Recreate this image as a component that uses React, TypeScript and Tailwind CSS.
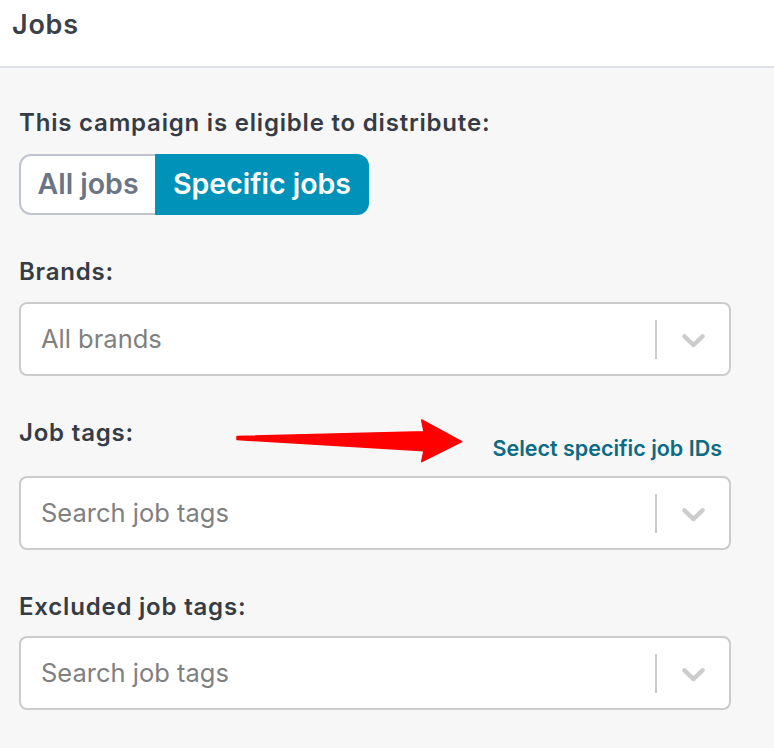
import React from "react"

function Chevron() {
  return (
    <svg viewBox="0 0 20 20" className="h-[39px] w-[39px] fill-[#cccccc]">
      <path d="M4.516 7.548c0.436-0.446 1.043-0.481 1.576 0l3.908 3.747 3.908-3.747c0.533-0.481 1.141-0.446 1.574 0 0.436 0.445 0.408 1.197 0 1.615-0.406 0.418-4.695 4.502-4.695 4.502-0.217 0.223-0.502 0.335-0.787 0.335s-0.57-0.112-0.789-0.335c0 0-4.287-4.084-4.695-4.502s-0.436-1.17 0-1.615z" />
    </svg>
  )
}

function SelectBox({ placeholder }: { placeholder: string }) {
  return (
    <div className="flex h-[74px] w-[712px] items-center rounded-[8px] border-2 border-[#cccccc] bg-white">
      <div className="flex-1 pl-[20px] text-[25.5px] text-[#808080]">{placeholder}</div>
      <div className="h-[39px] w-[2px] bg-[#cccccc]" />
      <div className="flex w-[72px] items-center justify-center">
        <Chevron />
      </div>
    </div>
  )
}

function Label({ children }: { children: React.ReactNode }) {
  return (
    <div className="flex h-[30px] items-center text-[24px] font-semibold tracking-[0.8px] text-[#363c45]">
      {children}
    </div>
  )
}

export default function App() {
  return (
    <div className="relative h-[748px] w-[774px] overflow-hidden bg-[#f7f7f7] font-['Inter',sans-serif]">
      <div className="h-[68px] border-b-2 border-[#dde0e4] bg-white pl-[12px] pt-[10px]">
        <div className="flex h-[30px] items-center text-[27px] font-semibold tracking-[0.75px] text-[#3b4049]">
          Jobs
        </div>
      </div>

      <div className="pl-[19px] pt-[40px]">
        <Label>This campaign is eligible to distribute:</Label>
        <div className="mt-[16px] flex h-[61px] w-[350px] text-[28.5px] font-semibold">
          <button className="flex w-[136px] items-center justify-center rounded-l-[12px] border-2 border-r-0 border-[#c0c4cc] bg-white text-[#6b7585]">
            All jobs
          </button>
          <button className="flex flex-1 items-center justify-center rounded-r-[12px] bg-[#0092b8] text-white">
            Specific jobs
          </button>
        </div>

        <div className="mt-[42px]">
          <Label>Brands:</Label>
          <div className="mt-[15px]">
            <SelectBox placeholder="All brands" />
          </div>
        </div>

        <div className="mt-[42px]">
          <div className="flex w-[712px] items-start justify-between">
            <Label>Job tags:</Label>
            <div className="mr-[9px] mt-[16px] flex h-[28px] items-center text-[21.5px] font-semibold text-[#0b6b84]">
              Select specific job IDs
            </div>
          </div>
          <div className="mt-[14px]">
            <SelectBox placeholder="Search job tags" />
          </div>
        </div>

        <div className="mt-[42px]">
          <Label>Excluded job tags:</Label>
          <div className="mt-[14px]">
            <SelectBox placeholder="Search job tags" />
          </div>
        </div>
      </div>

      <svg className="pointer-events-none absolute left-0 top-0" width="774" height="748">
        <polygon
          points="237,436.5 424,431.7 421.7,420 461.7,441.7 421.7,461.7 424,450.7 237,439.5"
          fill="#ff0000"
          stroke="#ff0000"
          strokeWidth="1.5"
          strokeLinejoin="round"
        />
      </svg>
    </div>
  )
}
